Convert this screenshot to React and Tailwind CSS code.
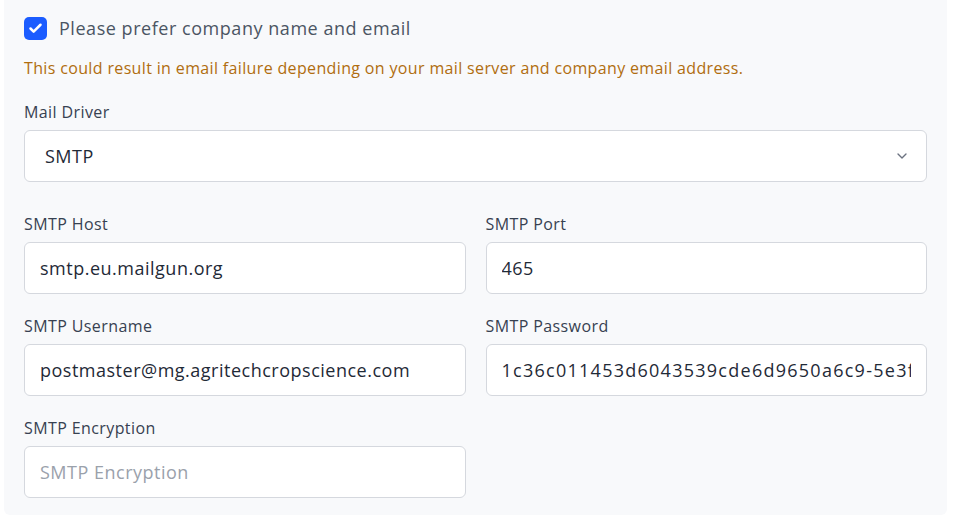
import { Check, ChevronDown } from 'lucide-react'

const font = { fontFamily: '"Open Sans", "Noto Sans", sans-serif' }

const inputCls = [
  'w-full h-[52px] bg-white border border-[#d5d8de] rounded-md px-[15px] text-[18px] text-[#1f2a37]',
  'placeholder:text-[#9aa1ab] focus:outline-none',
].join(' ')

function Field({ label, children }) {
  return (
    <div className="flex flex-col gap-[6px]">
      <label className="text-[16px] leading-6 text-[#374151] tracking-[0.025em]">{label}</label>
      {children}
    </div>
  )
}

export default function App() {
  return (
    <div className="min-h-screen bg-white pl-[4px]" style={font}>
      <div className="w-[943px] bg-[#f8f9fb] rounded-b-md px-5 pt-4 pb-[17px]">
        {/* prefer company checkbox */}
        <label className="flex items-center gap-3 h-6">
          <span className="w-[23px] h-[23px] rounded-[5px] bg-[#1b5cff] flex items-center justify-center">
            <Check size={15} strokeWidth={4} className="text-white" />
          </span>
          <span className="text-[18px] text-[#4b5563] tracking-[0.03em]">Please prefer company name and email</span>
        </label>

        <p className="mt-4 text-[16px] leading-6 text-[#b06d0f] tracking-[0.022em]">
          This could result in email failure depending on your mail server and company email address.
        </p>

        <div className="mt-5">
          <Field label="Mail Driver">
            <div className="h-[52px] bg-white border border-[#d5d8de] rounded-md pl-5 pr-4 flex items-center justify-between">
              <span className="text-[18px] text-[#1f2a37] tracking-[0.028em]">SMTP</span>
              <ChevronDown size={16} strokeWidth={2} className="text-[#6b7280]" />
            </div>
          </Field>
        </div>

        <div className="mt-[30px] grid grid-cols-2 gap-x-5 gap-y-5">
          <Field label="SMTP Host">
            <input className={`${inputCls} tracking-[0.028em]`} defaultValue="smtp.eu.mailgun.org" />
          </Field>
          <Field label="SMTP Port">
            <input className={`${inputCls} tracking-[0.028em]`} defaultValue="465" />
          </Field>
          <Field label="SMTP Username">
            <input className={`${inputCls} tracking-[0.028em]`} defaultValue="postmaster@mg.agritechcropscience.com" />
          </Field>
          <Field label="SMTP Password">
            <input className={`${inputCls} tracking-[0.07em]`} defaultValue="1c36c011453d6043539cde6d9650a6c9-5e3f36f5-a83b0c4e" />
          </Field>
          <Field label="SMTP Encryption">
            <input className={`${inputCls} tracking-[0.028em]`} placeholder="SMTP Encryption" />
          </Field>
        </div>
      </div>
    </div>
  )
}
